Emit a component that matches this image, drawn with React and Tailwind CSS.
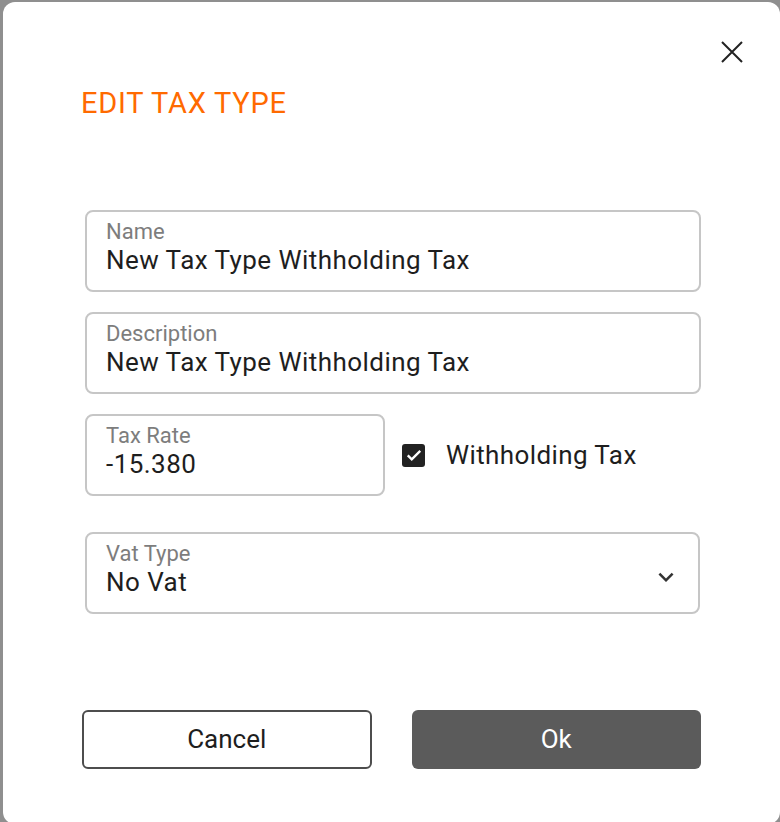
import React, { useState } from 'react';

const Field = ({ label, value, className = '', children }) => (
  <div
    className={`flex h-[82px] items-start rounded-lg border-2 border-[#c6c6c6] pl-[19px] pr-[16px] pt-[8px] ${className}`}
  >
    <div className="flex-1">
      <div className="text-[22px] leading-[24px] text-[#7d7d7d]">{label}</div>
      <div className="mt-[1px] text-[26px] leading-[30px] tracking-[0.45px] text-[#1e1e1e]">{value}</div>
    </div>
    {children}
  </div>
);

const EditTaxType = () => {
  const [withholding, setWithholding] = useState(true);

  return (
    <div className="relative h-[822px] w-[777px] rounded-xl bg-white px-[79px] pt-[85px]">
      {/* Close */}
      <button className="absolute right-[37px] top-[39px] h-[22px] w-[22px]" aria-label="Close">
        <svg viewBox="0 0 22 22" className="h-[22px] w-[22px]" fill="none" stroke="#222" strokeWidth="2">
          <path d="M1 1L21 21M21 1L1 21" />
        </svg>
      </button>

      <h2 className="-ml-[1px] text-[29px] leading-[32px] tracking-[0.75px] text-[#ff6a00]">EDIT TAX TYPE</h2>

      <div className="mt-[91px] flex flex-col gap-[20px] pl-[3px]">
        <Field label="Name" value="New Tax Type Withholding Tax" />
        <Field label="Description" value="New Tax Type Withholding Tax" />

        <div className="flex items-center">
          <Field label="Tax Rate" value="-15.380" className="w-[300px]" />
          <button
            type="button"
            onClick={() => setWithholding(!withholding)}
            className="ml-[17px] flex items-center"
          >
            <span
              className={`flex h-[23px] w-[23px] items-center justify-center rounded-[3px] ${
                withholding ? 'bg-[#222]' : 'border-2 border-[#222] bg-white'
              }`}
            >
              {withholding && (
                <svg viewBox="0 0 24 24" className="h-[20px] w-[20px]" fill="none" stroke="#fff" strokeWidth="2.8">
                  <path d="M4.5 12.5l4.8 4.8L19.5 7" />
                </svg>
              )}
            </span>
            <span className="ml-[21px] text-[26px] leading-[30px] tracking-[0.4px] text-[#1e1e1e]">
              Withholding Tax
            </span>
          </button>
        </div>

        <Field label="Vat Type" value="No Vat" className="mr-[1px] mt-[16px]">
          <svg viewBox="0 0 24 24" className="mr-[1px] h-[30px] w-[30px] self-center" fill="#333">
            <path d="M16.59 8.59 12 13.17 7.41 8.59 6 10l6 6 6-6z" />
          </svg>
        </Field>
      </div>

      <div className="mt-[96px] flex gap-[40px]">
        <button className="h-[59px] w-[290px] rounded-md border-2 border-[#4d4d4d] text-[26px] text-[#1e1e1e]">
          Cancel
        </button>
        <button className="h-[59px] w-[290px] rounded-md bg-[#5b5b5b] text-[26px] text-white">Ok</button>
      </div>
    </div>
  );
};

export default function App() {
  return (
    <div className="h-[822px] overflow-hidden bg-[#8f8f8f] pl-[3px] pt-[2px] font-['Roboto',sans-serif]">
      <EditTaxType />
    </div>
  );
}
